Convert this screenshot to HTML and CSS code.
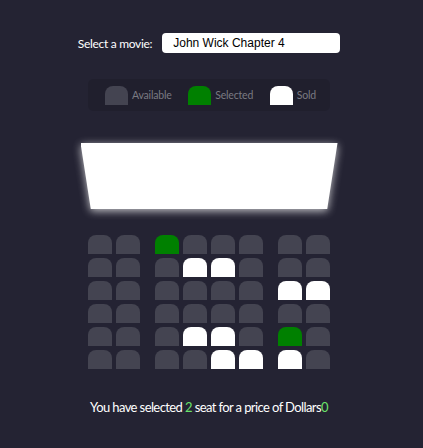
FILE: index.html
```html
<!DOCTYPE html>
<html lang="en">
<head>
<meta charset="UTF-8">
<title>Movie Seat Booking</title>
<link rel="stylesheet" href="styles.css">
</head>
<body>
<div class="page">
  <div class="movie-container">
    <label class="movie-label" for="movie">Select a movie:</label>
    <select id="movie" class="movie-select">
      <option>John Wick Chapter 4</option>
    </select>
  </div>

  <ul class="showcase">
    <li class="showcase-item"><div class="seat"></div><small>Available</small></li>
    <li class="showcase-item"><div class="seat selected"></div><small>Selected</small></li>
    <li class="showcase-item"><div class="seat sold"></div><small>Sold</small></li>
  </ul>

  <div class="theatre">
    <div class="screen-glow"><div class="screen"></div></div>

    <div class="row">
      <div class="seat"></div><div class="seat aisle-r"></div>
      <div class="seat selected"></div><div class="seat"></div><div class="seat"></div><div class="seat aisle-r"></div>
      <div class="seat"></div><div class="seat"></div>
    </div>
    <div class="row">
      <div class="seat"></div><div class="seat aisle-r"></div>
      <div class="seat"></div><div class="seat sold"></div><div class="seat sold"></div><div class="seat aisle-r"></div>
      <div class="seat"></div><div class="seat"></div>
    </div>
    <div class="row">
      <div class="seat"></div><div class="seat aisle-r"></div>
      <div class="seat"></div><div class="seat"></div><div class="seat"></div><div class="seat aisle-r"></div>
      <div class="seat sold"></div><div class="seat sold"></div>
    </div>
    <div class="row">
      <div class="seat"></div><div class="seat aisle-r"></div>
      <div class="seat"></div><div class="seat"></div><div class="seat"></div><div class="seat aisle-r"></div>
      <div class="seat"></div><div class="seat"></div>
    </div>
    <div class="row">
      <div class="seat"></div><div class="seat aisle-r"></div>
      <div class="seat"></div><div class="seat sold"></div><div class="seat sold"></div><div class="seat aisle-r"></div>
      <div class="seat selected"></div><div class="seat"></div>
    </div>
    <div class="row">
      <div class="seat"></div><div class="seat aisle-r"></div>
      <div class="seat"></div><div class="seat"></div><div class="seat sold"></div><div class="seat sold aisle-r"></div>
      <div class="seat sold"></div><div class="seat"></div>
    </div>
  </div>

  <p class="text">You have selected <span class="count">2</span> seat for a price of Dollars<span class="total">0</span></p>
</div>
</body>
</html>
```

FILE: styles.css
```css
* {
  box-sizing: border-box;
}

html, body {
  margin: 0;
  padding: 0;
}

body {
  background-color: #242333;
  color: #ffffff;
  font-family: "Lato", "Liberation Sans", sans-serif;
  height: 448px;
  overflow: hidden;
}

.page {
  width: 418px;
  display: flex;
  flex-direction: column;
  align-items: center;
}

.movie-container {
  display: flex;
  align-items: center;
  margin-top: 33px;
  height: 20px;
}

.movie-label {
  font-size: 12px;
  letter-spacing: -0.3px;
  margin-right: 10px;
}

.movie-select {
  appearance: none;
  -webkit-appearance: none;
  background: #ffffff;
  border: 0;
  border-radius: 4px;
  width: 178px;
  height: 20px;
  padding: 0 0 0 11px;
  font-family: "Liberation Sans", Arial, sans-serif;
  font-size: 12px;
  color: #000000;
}

.showcase {
  list-style: none;
  margin: 26px 0 0;
  width: 242px;
  height: 32px;
  padding: 0 14px 0 17px;
  display: flex;
  align-items: center;
  justify-content: space-between;
  background: rgba(0, 0, 0, 0.1);
  border-radius: 5px;
  color: #7a7a82;
}

.showcase-item {
  display: flex;
  align-items: center;
}

.showcase-item small {
  font-size: 10.5px;
  letter-spacing: -0.2px;
  margin-left: 4px;
}

.showcase .seat {
  width: 23px;
  margin: 0;
}

.seat {
  background-color: #444451;
  width: 24px;
  height: 19px;
  margin: 2px;
  border-top-left-radius: 8px;
  border-top-right-radius: 8px;
}

.seat.selected {
  background-color: #008000;
}

.seat.sold {
  background-color: #ffffff;
}

.seat.aisle-r {
  margin-right: 13px;
}

.theatre {
  display: flex;
  flex-direction: column;
  align-items: center;
  margin-top: 32px;
}

.screen-glow {
  filter: drop-shadow(0 2px 4px rgba(255, 255, 255, 0.75));
  margin-bottom: 24px;
}

.screen {
  width: 257px;
  height: 66px;
  background: #ffffff;
  clip-path: polygon(0 0, 100% 0, 96% 100%, 4% 100%);
}

.row {
  display: flex;
}

.text {
  margin: 28px 0 0;
  font-size: 13px;
  letter-spacing: -0.6px;
  color: #ffffff;
}

.count,
.total {
  color: #6ae26a;
}
```
